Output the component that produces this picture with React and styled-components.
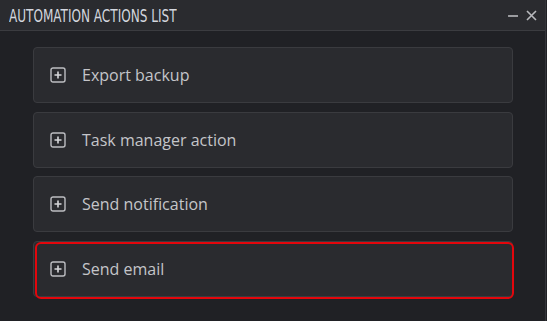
import React from "react";
import styled, { createGlobalStyle, css } from "styled-components";

const Global = createGlobalStyle`
  html, body { margin: 0; padding: 0; background: #202125; }
  body { font-family: "Open Sans", "Noto Sans", sans-serif; }
`;

const Window = styled.div`
  width: 546px;
  height: 321px;
  box-sizing: border-box;
  background: #202125;
  border-right: 1px solid #34353a;
  display: flex;
  flex-direction: column;
  overflow: hidden;
`;

const Header = styled.div`
  height: 31px;
  flex: none;
  box-sizing: border-box;
  background: #2a2b2f;
  border-bottom: 1px solid #3b3c40;
  display: flex;
  align-items: center;
  justify-content: space-between;
  padding: 0 8px 0 9px;
`;

const Title = styled.div`
  font-family: "DejaVu Sans Condensed", "DejaVu Sans", sans-serif;
  font-size: 18px;
  line-height: 20px;
  color: #d3d6de;
  transform: scaleX(0.745);
  transform-origin: left center;
  white-space: nowrap;
  padding-top: 2px;
`;

const Controls = styled.div`
  display: flex;
  gap: 7px;
  align-items: center;
`;

const Body = styled.div`
  flex: 1;
  display: flex;
  flex-direction: column;
  gap: 8.5px;
  padding: 16px 32px 0 33px;
`;

const Card = styled.div`
  position: relative;
  height: 56px;
  flex: none;
  box-sizing: border-box;
  background: #2a2b2f;
  border: 1px solid #3a3b3f;
  border-radius: 4px;
  display: flex;
  align-items: center;
  padding-left: 16px;
  gap: 16px;
  cursor: pointer;
  ${(p) =>
    p.$active &&
    css`
      &::after {
        content: "";
        position: absolute;
        top: 0px;
        left: 1px;
        right: -2px;
        bottom: -3px;
        border: 2px solid #e3060c;
        border-radius: 6px;
        pointer-events: none;
      }
    `}
`;

const Label = styled.span`
  font-size: 16px;
  color: #c4c5c9;
  line-height: 20px;
  padding-top: ${(p) => (p.$active ? "1px" : "0")};
`;

const IconWrap = styled.span`
  display: flex;
  padding-top: ${(p) => (p.$active ? "1px" : "0")};
`;

const PlusIcon = () => (
  <svg width="16" height="16" viewBox="0 0 16 16">
    <rect x="1" y="1" width="14" height="14" rx="2" fill="none" stroke="#bdbec2" strokeWidth="1.4" />
    <path d="M8 4.5v7M4.5 8h7" stroke="#d6d7da" strokeWidth="1.6" />
  </svg>
);

const items = ["Export backup", "Task manager action", "Send notification", "Send email"];

export default function App() {
  return (
    <>
      <Global />
      <Window>
        <Header>
          <Title>AUTOMATION ACTIONS LIST</Title>
          <Controls>
            <svg width="11" height="11" viewBox="0 0 11 11">
              <path d="M0 6h10" stroke="#b8b9bd" strokeWidth="1.6" />
            </svg>
            <svg width="11" height="11" viewBox="0 0 11 11">
              <path d="M1 1l9 9M10 1l-9 9" stroke="#b8b9bd" strokeWidth="1.6" />
            </svg>
          </Controls>
        </Header>
        <Body>
          {items.map((t, i) => (
            <Card key={t} $active={i === 3}>
              <IconWrap $active={i === 3}>
                <PlusIcon />
              </IconWrap>
              <Label $active={i === 3}>{t}</Label>
            </Card>
          ))}
        </Body>
      </Window>
    </>
  );
}
